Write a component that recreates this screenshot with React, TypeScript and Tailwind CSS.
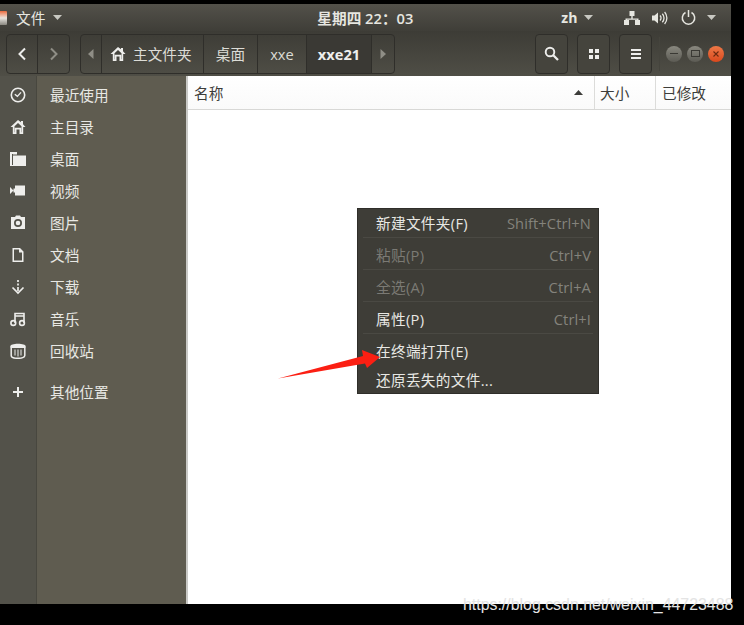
import { ReactNode } from 'react';

const cjk = "font-['Open_Sans','Noto_Sans_CJK_SC',sans-serif]";

function Caret({ className = '' }: { className?: string }) {
  return (
    <svg width="9" height="5" viewBox="0 0 9 5" className={className}>
      <path d="M0 0h9L4.5 5z" fill="currentColor" />
    </svg>
  );
}

const sidebarIcons: Record<string, ReactNode> = {
  recent: (
    <>
      <circle cx="8" cy="8" r="6.7" fill="none" stroke="currentColor" strokeWidth="1.6" />
      <path d="M4.8 7.2 7.4 9.4 11 5.4" fill="none" stroke="currentColor" strokeWidth="1.4" />
    </>
  ),
  home: <path d="M8 1 .5 8h2.3v7h3.7v-4.5h3V15h3.7V8h2.3L13 5.2V2h-2v1.3zM4.5 7.2 8 4l3.5 3.2v6.1h-.3V8.8H4.8v4.5h-.3z" fill="currentColor" fillRule="evenodd" />,
  desktop: <path d="M0 1h7v2H2v11.500H0zM3 4.500h13V15H0v-1h3zM3 3h4v.5H3z" fill="currentColor" />,
  video: <path d="M5 2.500h10v10H5zM0 4l3.500 3.500L0 11zM3.500 5.500H5v4H3.500z" fill="currentColor" />,
  picture: <path d="M5 2 6 .5h4L11 2h4v12H1V2zM8 4a4 4 0 1 0 0 8 4 4 0 0 0 0-8zm0 1.700a2.300 2.300 0 1 1 0 4.600 2.300 2.300 0 0 1 0-4.600z" fill="currentColor" fillRule="evenodd" />,
  document: <path d="M2.500 1H10l3.500 3.500V15h-11zM4 2.500v11h8V5.500H9v-3z" fill="currentColor" fillRule="evenodd" />,
  download: (
    <>
      <path d="M8 1v2M8 4.500v2M8 8v4" stroke="currentColor" strokeWidth="1.700" fill="none" />
      <path d="M2.500 8.500 8 14l5.500-5.500" stroke="currentColor" strokeWidth="1.700" fill="none" />
    </>
  ),
  music: (
    <>
      <circle cx="3.300" cy="12" r="2.400" fill="none" stroke="currentColor" strokeWidth="1.600" />
      <circle cx="12" cy="12" r="2.400" fill="none" stroke="currentColor" strokeWidth="1.600" />
      <path d="M5 12V2.500h9V12M5 5h9" stroke="currentColor" strokeWidth="1.600" fill="none" />
    </>
  ),
  trash: (
    <>
      <path d="M.3 3.500C.3 1.800 3.800.8 8 .8s7.700 1 7.700 2.700V5H.3z" fill="currentColor" />
      <path d="M1.200 5v7.500C1.200 14.500 4.500 15.300 8 15.300s6.800-.8 6.800-2.800V5" fill="none" stroke="currentColor" strokeWidth="1.500" />
      <path d="M5 6.500v6M8 6.500v7M11 6.500v6" stroke="currentColor" strokeWidth="1" fill="none" />
    </>
  ),
  plus: <path d="M7 3h2v4h4v2H9v4H7V9H3V7h4z" fill="currentColor" />,
};

const places = [
  { icon: 'recent', label: '最近使用' },
  { icon: 'home', label: '主目录' },
  { icon: 'desktop', label: '桌面' },
  { icon: 'video', label: '视频' },
  { icon: 'picture', label: '图片' },
  { icon: 'document', label: '文档' },
  { icon: 'download', label: '下载' },
  { icon: 'music', label: '音乐' },
  { icon: 'trash', label: '回收站' },
];

function Place({ icon, label, className = '' }: { icon: string; label: string; className?: string }) {
  return (
    <div className={`flex h-8 items-center ${className}`}>
      <div className="flex w-[37px] shrink-0 justify-center pr-[1px] text-[#eeeeec]">
        <svg width="16" height="16" viewBox="0 0 16 16">
          {sidebarIcons[icon]}
        </svg>
      </div>
      <span className="pl-[13px] text-[14.67px] text-[#e8e8e4]">{label}</span>
    </div>
  );
}

function ToolButton({ children }: { children: ReactNode }) {
  return (
    <div className="flex h-[40px] w-[33px] items-center justify-center rounded-[4px] border border-[#2f2e2a] bg-[#45443d] text-[#eeeeec]">
      {children}
    </div>
  );
}

function PathSegment({ children, active = false, className = '' }: { children: ReactNode; active?: boolean; className?: string }) {
  return (
    <div
      className={`flex h-full items-center justify-center border-r border-[#2f2e2a] text-[14.67px] ${
        active ? 'bg-[#3a3934] font-bold text-[#eeeeec]' : 'text-[#dcdcd6]'
      } ${className}`}
    >
      {children}
    </div>
  );
}

const menuItems = [
  { label: '新建文件夹(F)', key: 'Shift+Ctrl+N', off: false, row: 'h-[29px]' },
  { label: '粘贴(P)', key: 'Ctrl+V', off: true, row: 'h-[32px] pt-[2px]' },
  { label: '全选(A)', key: 'Ctrl+A', off: true, row: 'h-[32px] pt-[2px]' },
  { label: '属性(P)', key: 'Ctrl+I', off: false, row: 'h-[32px] pt-[2px]' },
];

export default function App() {
  return (
    <div className={`relative flex h-[625px] w-[744px] flex-col overflow-hidden bg-black ${cjk}`}>
      <div className="mt-[4px] w-[731px]">
        {/* top bar */}
        <div className="flex h-[27px] items-center bg-gradient-to-b from-[#53514a] to-[#3f3e38] text-[14.67px] text-[#e6e6e0]">
          <div className="h-[14px] w-[7px] rounded-r-[1px] bg-gradient-to-b from-[#e9693a] via-[#e8e6e0] to-[#8a8880]" />
          <span className="ml-[9px]">文件</span>
          <Caret className="ml-[8px] text-[#c8c8c2]" />
          <span className="ml-[255px] w-[96px] whitespace-nowrap text-center text-[14.67px] font-semibold">星期四 22：03</span>
          <span className="ml-[148px] text-[14px] font-bold">zh</span>
          <Caret className="ml-[7px] text-[#c8c8c2]" />
          <svg width="16" height="14" viewBox="0 0 16 14" className="ml-[31px] text-[#e6e6e0]">
            <path d="M5.500 0h5v5H8.700v2.500H14.500V9H16v5h-5V9h2V8.800H3V9h2v5H0V9h1.500V7.500h5.800V5H5.500z" fill="currentColor" />
          </svg>
          <svg width="16" height="14" viewBox="0 0 16 14" className="ml-[12px] text-[#e6e6e0]">
            <path d="M0 4.500h2.500L6 1.500v11l-3.500-3H0z" fill="currentColor" />
            <path d="M8 4.500a3.500 3.500 0 0 1 0 5M10.300 2.800a6 6 0 0 1 0 8.400M12.600 1a9 9 0 0 1 0 12" fill="none" stroke="currentColor" strokeWidth="1.300" />
          </svg>
          <svg width="15" height="15" viewBox="0 0 15 15" className="ml-[13px] text-[#e6e6e0]">
            <path d="M4.500 2.500a6.200 6.200 0 1 0 6 0M7.500 0v7" fill="none" stroke="currentColor" strokeWidth="1.500" />
          </svg>
          <Caret className="ml-[11px] text-[#c8c8c2]" />
        </div>

        {/* toolbar */}
        <div className="flex h-[45px] items-center bg-gradient-to-b from-[#3d3c36] to-[#4f4e46] pl-[6px]">
          <div className="flex h-[40px] w-[64px] overflow-hidden rounded-[4px] border border-[#2f2e2a]">
            <div className="flex w-[31px] items-center justify-center border-r border-[#2f2e2a] text-[#eeeeec]">
              <svg width="10" height="14" viewBox="0 0 10 14">
                <path d="M8 1.500 2.500 7 8 12.500" fill="none" stroke="currentColor" strokeWidth="2" />
              </svg>
            </div>
            <div className="flex flex-1 items-center justify-center text-[#8f8e86]">
              <svg width="10" height="14" viewBox="0 0 10 14">
                <path d="M2 1.500 7.500 7 2 12.500" fill="none" stroke="currentColor" strokeWidth="2" />
              </svg>
            </div>
          </div>
          <div className="ml-[10px] flex h-[40px] w-[315px] overflow-hidden rounded-[4px] border border-[#2f2e2a]">
            <PathSegment className="w-[21px] text-[#8f8e86]">
              <svg width="6" height="10" viewBox="0 0 6 10">
                <path d="M5.500 0v10L0 5z" fill="#8f8e86" />
              </svg>
            </PathSegment>
            <PathSegment className="w-[102px] !justify-start pl-[8px]">
              <svg width="16" height="16" viewBox="0 0 16 16" className="mr-[7px] text-[#eeeeec]">
                {sidebarIcons.home}
              </svg>
              主文件夹
            </PathSegment>
            <PathSegment className="w-[54px]">桌面</PathSegment>
            <PathSegment className="w-[49px]">xxe</PathSegment>
            <PathSegment active className="w-[65px]">xxe21</PathSegment>
            <div className="flex flex-1 items-center justify-center">
              <svg width="6" height="10" viewBox="0 0 6 10">
                <path d="M.5 0v10L6 5z" fill="#8f8e86" />
              </svg>
            </div>
          </div>
          <div className="ml-[140px] flex gap-[9px]">
            <ToolButton>
              <svg width="15" height="15" viewBox="0 0 15 15">
                <circle cx="6" cy="6" r="4.300" fill="none" stroke="currentColor" strokeWidth="1.900" />
                <path d="M9 9l5 5" stroke="currentColor" strokeWidth="2.300" />
              </svg>
            </ToolButton>
            <ToolButton>
              <svg width="12" height="12" viewBox="0 0 12 12">
                <path d="M1 1h4v4H1zM7 1h4v4H7zM1 7h4v4H1zM7 7h4v4H7z" fill="currentColor" />
              </svg>
            </ToolButton>
            <ToolButton>
              <svg width="12" height="12" viewBox="0 0 12 12">
                <path d="M1 1h10v2H1zM1 5h10v2H1zM1 9h10v2H1z" fill="currentColor" />
              </svg>
            </ToolButton>
          </div>
          <div className="ml-[7px] h-[34px] w-px bg-[#45443d]" />
          <div className="ml-[6px] flex items-center gap-[5px]">
            <div className="flex h-4 w-4 items-center justify-center rounded-full bg-gradient-to-b from-[#8a8980] to-[#5c5b54]">
              <div className="h-[1.500px] w-2 bg-[#3a3934]" />
            </div>
            <div className="flex h-4 w-4 items-center justify-center rounded-full bg-gradient-to-b from-[#8a8980] to-[#5c5b54]">
              <div className="h-[7px] w-[9px] border border-[#3a3934]" />
            </div>
            <div className="flex h-4 w-4 items-center justify-center rounded-full bg-gradient-to-b from-[#ee7846] to-[#d9481c]">
              <svg width="8" height="8" viewBox="0 0 8 8">
                <path d="M1.500 1.500l5 5M6.500 1.500l-5 5" stroke="#6b2a10" strokeWidth="1.100" />
              </svg>
            </div>
          </div>
        </div>

        {/* main */}
        <div className="flex h-[528px]">
          <aside className="relative flex w-[188px] shrink-0 border-r-2 border-[#c9c9c6] bg-[#5f5c50]">
            <div className="absolute inset-y-0 left-0 w-[37px] border-r border-[#48473f] bg-[#53524a]" />
            <div className="relative w-full pt-[3px]">
              {places.map(p => (
                <Place key={p.label} icon={p.icon} label={p.label} />
              ))}
              <Place icon="plus" label="其他位置" className="mt-[9px]" />
            </div>
          </aside>
          <div className="flex-1 bg-white">
            <div className="flex h-[34px] items-center border-b border-[#d8d8d6] bg-gradient-to-b from-white to-[#fafafa] text-[14.67px] text-[#3d3d3a]">
              <div className="flex h-full w-[407px] items-center justify-between border-r border-[#dcdcda] pl-[6px] pr-[11px]">
                <span>名称</span>
                <svg width="9" height="5" viewBox="0 0 9 5" className="text-[#3d3d3a]">
                  <path d="M0 5h9L4.500 0z" fill="currentColor" />
                </svg>
              </div>
              <div className="flex h-full w-[61px] items-center border-r border-[#dcdcda] pl-[5px]">大小</div>
              <div className="pl-[6px]">已修改</div>
            </div>
          </div>
        </div>
      </div>

      {/* context menu */}
      <div className="absolute left-[357px] top-[208px] h-[186px] w-[242px] border border-[#2f2e2a] bg-[#3e3d37] text-[14.67px]">
        {menuItems.map(item => (
          <div key={item.label} className={`mx-[5px] flex items-center justify-between border-b border-[#4a4943] pl-[13px] pr-[2px] ${item.row}`}>
            <span className={`tracking-[0.3px] ${item.off ? 'text-[#7b7a74]' : 'text-[#e8e8e4]'}`}>{item.label}</span>
            <span className="tracking-[0.1px] text-[#84837c]">{item.key}</span>
          </div>
        ))}
        <div className="flex h-[34px] items-center pl-[18px] tracking-[0.3px] text-[#e8e8e4]">在终端打开(E)</div>
        <div className="flex h-[24px] items-center pl-[18px] tracking-[0.3px] text-[#e8e8e4]">还原丢失的文件...</div>
      </div>

      {/* annotation arrow */}
      <svg width="110" height="40" viewBox="0 0 110 40" className="absolute left-[275px] top-[345px]">
        <path d="M3 33.500 88 11 87 5 105 12 92 23 90 18.500z" fill="#fb1f13" />
      </svg>

      {/* watermark */}
      <span className="absolute left-[463px] top-[596px] font-['Liberation_Sans',sans-serif] text-[15.9px] leading-[18px] text-[#e4e4e4]">
        https://blog.csdn.net/weixin_44723488
      </span>
    </div>
  );
}
